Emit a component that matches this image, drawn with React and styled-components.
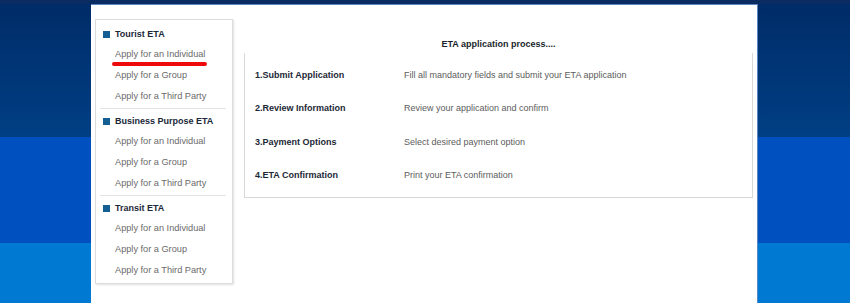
import React from 'react'
import styled, { createGlobalStyle } from 'styled-components'

const GlobalStyle = createGlobalStyle`
  html, body {
    margin: 0;
    padding: 0;
  }
  body {
    font-family: "Liberation Sans", Arial, sans-serif;
  }
`

const Page = styled.div`
  min-height: 303px;
  box-sizing: border-box;
  padding-top: 4px;
  background: linear-gradient(
    to bottom,
    #0b2b63 0px,
    #0b2b63 4px,
    #002c68 4px,
    #003f84 137px,
    #0050c0 137px,
    #0050c0 243px,
    #0079d3 243px,
    #0079d3 100%
  );
`

const Panel = styled.div`
  width: 667px;
  margin: 0 0 0 91px;
  min-height: 299px;
  box-sizing: border-box;
  background: #fff;
  border-top: 1px solid #5a86c4;
  border-right: 1px solid #5a86c4;
  padding: 14px 4px 12px 4px;
  display: flex;
  align-items: flex-start;
  gap: 11px;
`

const Sidebar = styled.nav`
  width: 138px;
  box-sizing: border-box;
  border: 1px solid #dcdcdc;
  box-shadow: 1px 1px 2px rgba(0, 0, 0, 0.12);
  padding: 2px 6px 0 4px;
  background: #fff;
`

const Section = styled.div`
  padding: 2px 0 ${p => (p.last ? '2px' : '1px')};
  border-bottom: ${p => (p.last ? 'none' : '1px solid #e4e4e4')};
`

const SectionTitle = styled.div`
  display: flex;
  align-items: center;
  gap: 5px;
  padding-left: 3px;
  height: 20px;
  font-size: 9px;
  font-weight: bold;
  color: #1b2838;

  &::before {
    content: '';
    width: 7px;
    height: 7px;
    background: #135f94;
    flex: none;
  }
`

const NavLink = styled.a`
  display: block;
  position: relative;
  height: 21px;
  line-height: 21px;
  padding-left: 15px;
  font-size: 9.2px;
  color: #6a6a6a;
  text-decoration: none;
`

const Marked = styled.span`
  position: relative;

  &::after {
    content: '';
    position: absolute;
    left: -3px;
    right: -2px;
    top: 13px;
    height: 4px;
    border-radius: 2px;
    background: #ee0a0a;
  }
`

const Main = styled.section`
  flex: 1;
  min-width: 0;
`

const Title = styled.h2`
  margin: 0;
  padding-top: 17px;
  line-height: 17px;
  font-size: 9px;
  font-weight: bold;
  text-align: center;
  color: #1a1f2c;
`

const StepBox = styled.div`
  border: 1px solid #d8d8d8;
  border-top: none;
  padding: 5px 10px 5px;
`

const Step = styled.div`
  display: grid;
  grid-template-columns: 149px 1fr;
  align-items: center;
  height: 33.5px;
  font-size: 9px;
`

const StepName = styled.div`
  font-weight: bold;
  color: #1c2736;
`

const StepText = styled.div`
  color: #5c5c5c;
`

const menu = [
  { title: 'Tourist ETA', marked: true },
  { title: 'Business Purpose ETA' },
  { title: 'Transit ETA' },
]

const links = ['Apply for an Individual', 'Apply for a Group', 'Apply for a Third Party']

const steps = [
  ['1.Submit Application', 'Fill all mandatory fields and submit your ETA application'],
  ['2.Review Information', 'Review your application and confirm'],
  ['3.Payment Options', 'Select desired payment option'],
  ['4.ETA Confirmation', 'Print your ETA confirmation'],
]

export default function App() {
  return (
    <>
      <GlobalStyle />
      <Page>
        <Panel>
          <Sidebar>
            {menu.map((m, i) => (
              <Section key={m.title} last={i === menu.length - 1}>
                <SectionTitle>{m.title}</SectionTitle>
                {links.map((l, j) => (
                  <NavLink key={l} href="#">
                    {m.marked && j === 0 ? <Marked>{l}</Marked> : l}
                  </NavLink>
                ))}
              </Section>
            ))}
          </Sidebar>
          <Main>
            <Title>ETA application process....</Title>
            <StepBox>
              {steps.map(([name, text]) => (
                <Step key={name}>
                  <StepName>{name}</StepName>
                  <StepText>{text}</StepText>
                </Step>
              ))}
            </StepBox>
          </Main>
        </Panel>
      </Page>
    </>
  )
}
